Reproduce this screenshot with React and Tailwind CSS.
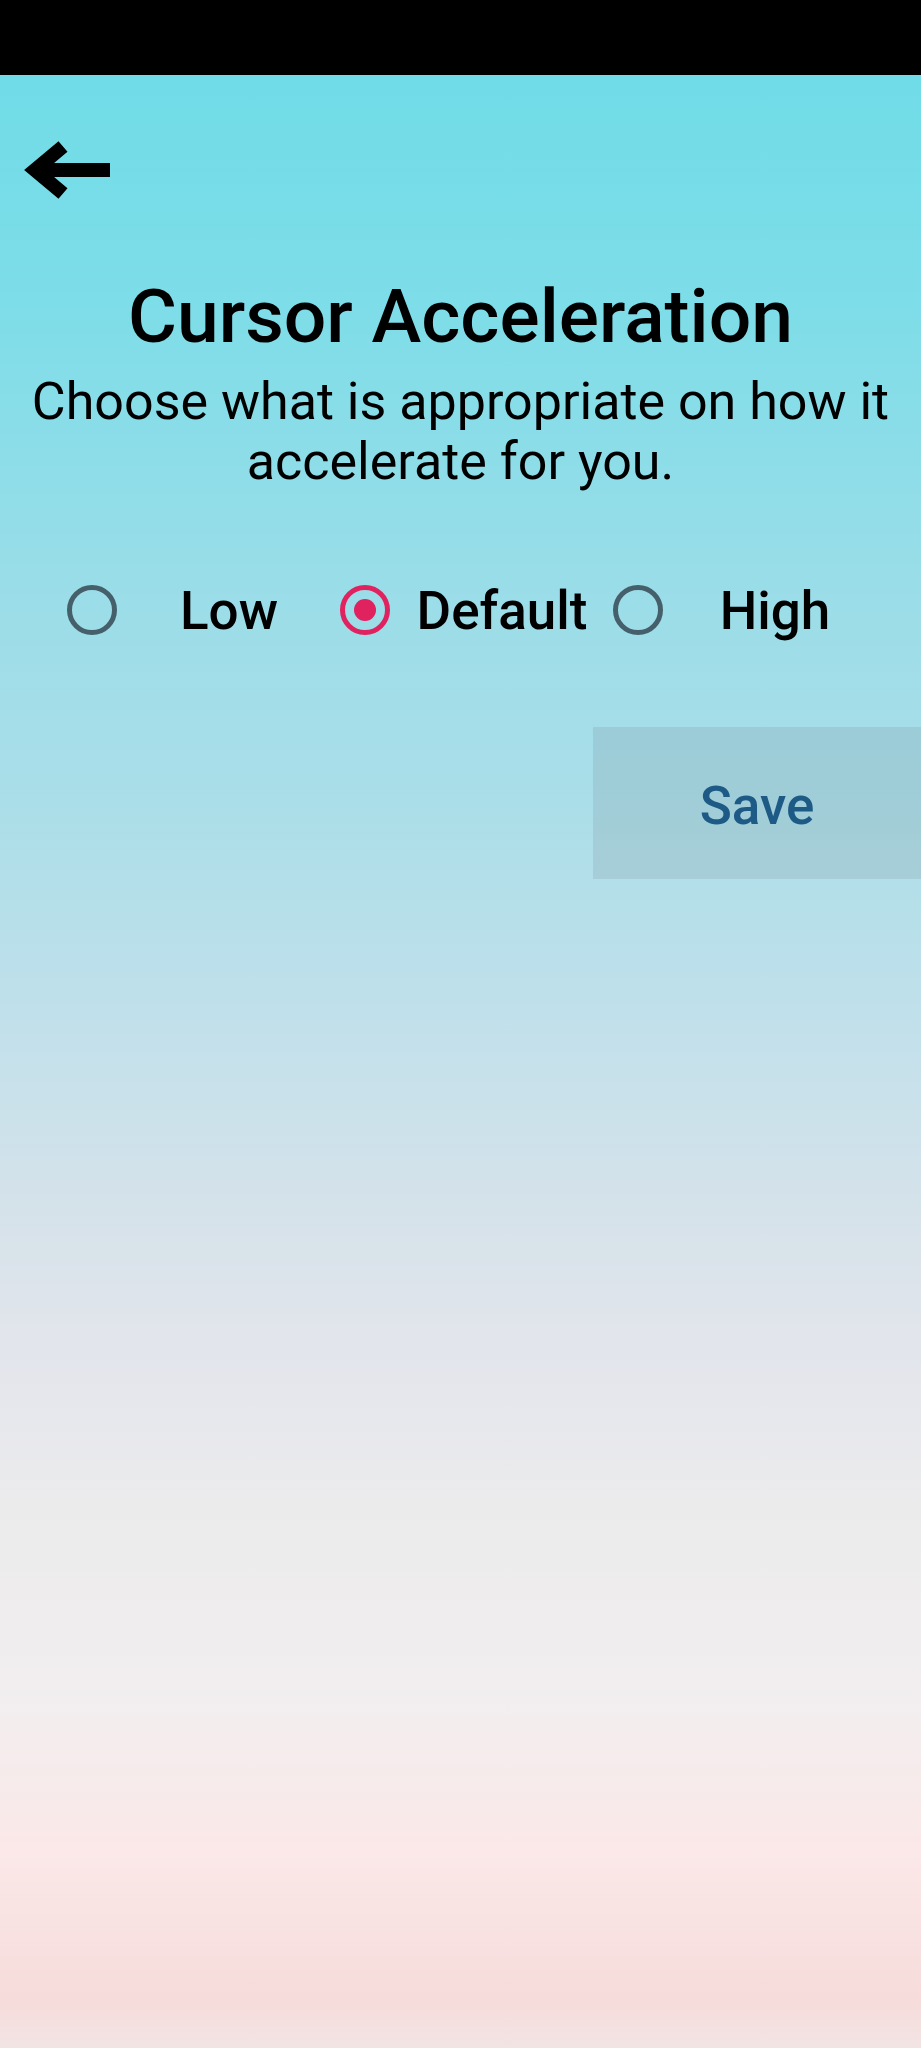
import React from "react";

function BackArrow() {
  return (
    <svg width="94" height="66" viewBox="0 0 94 66" className="block" aria-hidden="true">
      <polyline
        points="43,8.5 15,32 43,55.5"
        fill="none"
        stroke="#000"
        strokeWidth="14"
        strokeLinejoin="miter"
        strokeMiterlimit="4"
        strokeLinecap="butt"
      />
      <rect x="16" y="25" width="74" height="14" fill="#000" />
    </svg>
  );
}

function Radio({ checked }) {
  return checked ? (
    <span className="flex h-[50px] w-[50px] shrink-0 items-center justify-center rounded-full border-[5px] border-[#e0225f]">
      <span className="h-[22px] w-[22px] rounded-full bg-[#e0225f]" />
    </span>
  ) : (
    <span className="h-[50px] w-[50px] shrink-0 rounded-full border-[5px] border-[#45606a]" />
  );
}

function Option({ label, checked }) {
  return (
    <label className="flex items-center pl-[16px]">
      <Radio checked={checked} />
      <span className="flex-1 pl-[17px] pt-[2px] text-center text-[53px] font-medium leading-[50px] text-black">
        {label}
      </span>
    </label>
  );
}

export default function App() {
  return (
    <div
      className="flex min-h-[2048px] w-[921px] flex-col"
      style={{ fontFamily: "Roboto, 'Noto Sans', 'Liberation Sans', sans-serif" }}
    >
      <div className="h-[75px] shrink-0 bg-black" />
      <main className="flex flex-1 flex-col bg-[linear-gradient(180deg,#70dce7_0%,#7ddde8_11.4%,#9bdde8_26.6%,#aadee8_36.7%,#bfe0eb_46.9%,#d4e2ea_57%,#e3e5ec_64.6%,#ebebec_72.2%,#f2eeef_82.4%,#fbe8e8_90%,#f6dcdb_97.6%,#f2e4e4_100%)]">
        <div className="ml-[20px] mt-[63px]">
          <BackArrow />
        </div>

        <h1 className="mt-[75px] text-center text-[75px] font-medium leading-[75px] text-black">
          Cursor Acceleration
        </h1>

        <p className="mt-[18px] px-[20px] text-center text-[52px] font-normal leading-[60px] text-black">
          Choose what is appropriate on how it accelerate for you.
        </p>

        <div className="ml-[51px] mt-[92px] grid w-[819px] grid-cols-3">
          <Option label="Low" />
          <Option label="Default" checked />
          <Option label="High" />
        </div>

        <div className="mt-[91px] flex justify-end">
          <button
            type="button"
            className="flex h-[152px] w-[328px] items-center justify-center bg-[#7a8b97]/20 pt-[8px] text-[53px] font-medium text-[#1d5b86]"
          >
            Save
          </button>
        </div>
      </main>
    </div>
  );
}
